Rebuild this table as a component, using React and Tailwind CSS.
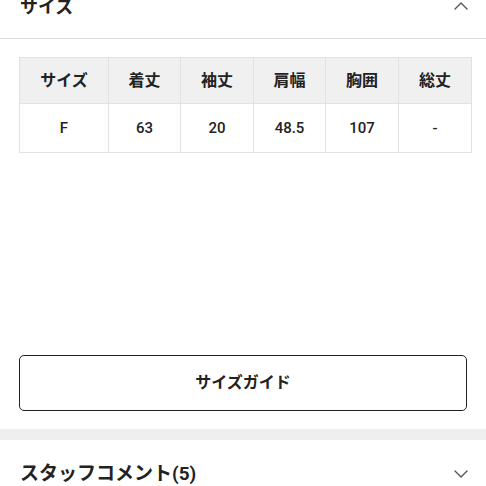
import React from "react";

const Chevron = ({ up }) => (
  <svg width="14" height="8" viewBox="0 0 14 8" fill="none" stroke="#555" strokeWidth="1.4" strokeLinecap="round" strokeLinejoin="round">
    {up ? <path d="M1 7 L7 1 L13 7" /> : <path d="M1 1 L7 7 L13 1" />}
  </svg>
);

export default function App() {
  const heads = ["サイズ", "着丈", "袖丈", "肩幅", "胸囲", "総丈"];
  const vals = ["F", "63", "20", "48.5", "107", "-"];
  const widths = ["w-[89px]", "w-[72px]", "w-[73px]", "w-[72px]", "w-[73px]", "w-[73px]"];
  return (
    <div className="w-[486px] h-[486px] overflow-hidden bg-white text-[#222]" style={{ fontFamily: "Roboto, 'Noto Sans CJK JP', sans-serif" }}>
      <div className="mt-[-26px] h-[65px] flex items-center justify-between pl-5 pr-[18px] border-b border-[#dcdcdc]">
        <span className="text-[18px] font-bold">サイズ</span>
        <Chevron up />
      </div>
      <div className="pt-[18px] pl-[19px]">
        <table className="w-[452px] border-collapse table-fixed">
          <colgroup>
            {widths.map((w, i) => <col key={i} className={w} />)}
          </colgroup>
          <tbody>
            <tr className="h-[46px] bg-[#f0f0f0]">
              {heads.map((h, i) => (
                <td key={i} className="border border-[#e2e2e2] text-center font-bold text-[16px] p-0">{h}</td>
              ))}
            </tr>
            <tr className="h-[49px]">
              {vals.map((v, i) => (
                <td key={i} className="border border-[#e2e2e2] text-center font-medium text-[15px] p-0">{v}</td>
              ))}
            </tr>
          </tbody>
        </table>
      </div>
      <div className="mt-[202px] pl-[19px]">
        <div className="w-[448px] h-[56px] border border-[#222] rounded-[5px] flex items-center justify-center text-[16px] font-bold">
          サイズガイド
        </div>
      </div>
      <div className="mt-[18px] h-[11px] bg-[#efefef]" />
      <div className="h-[68px] flex items-center justify-between pl-5 pr-[18px]">
        <span className="text-[19px] font-bold">スタッフコメント(5)</span>
        <Chevron />
      </div>
    </div>
  );
}
